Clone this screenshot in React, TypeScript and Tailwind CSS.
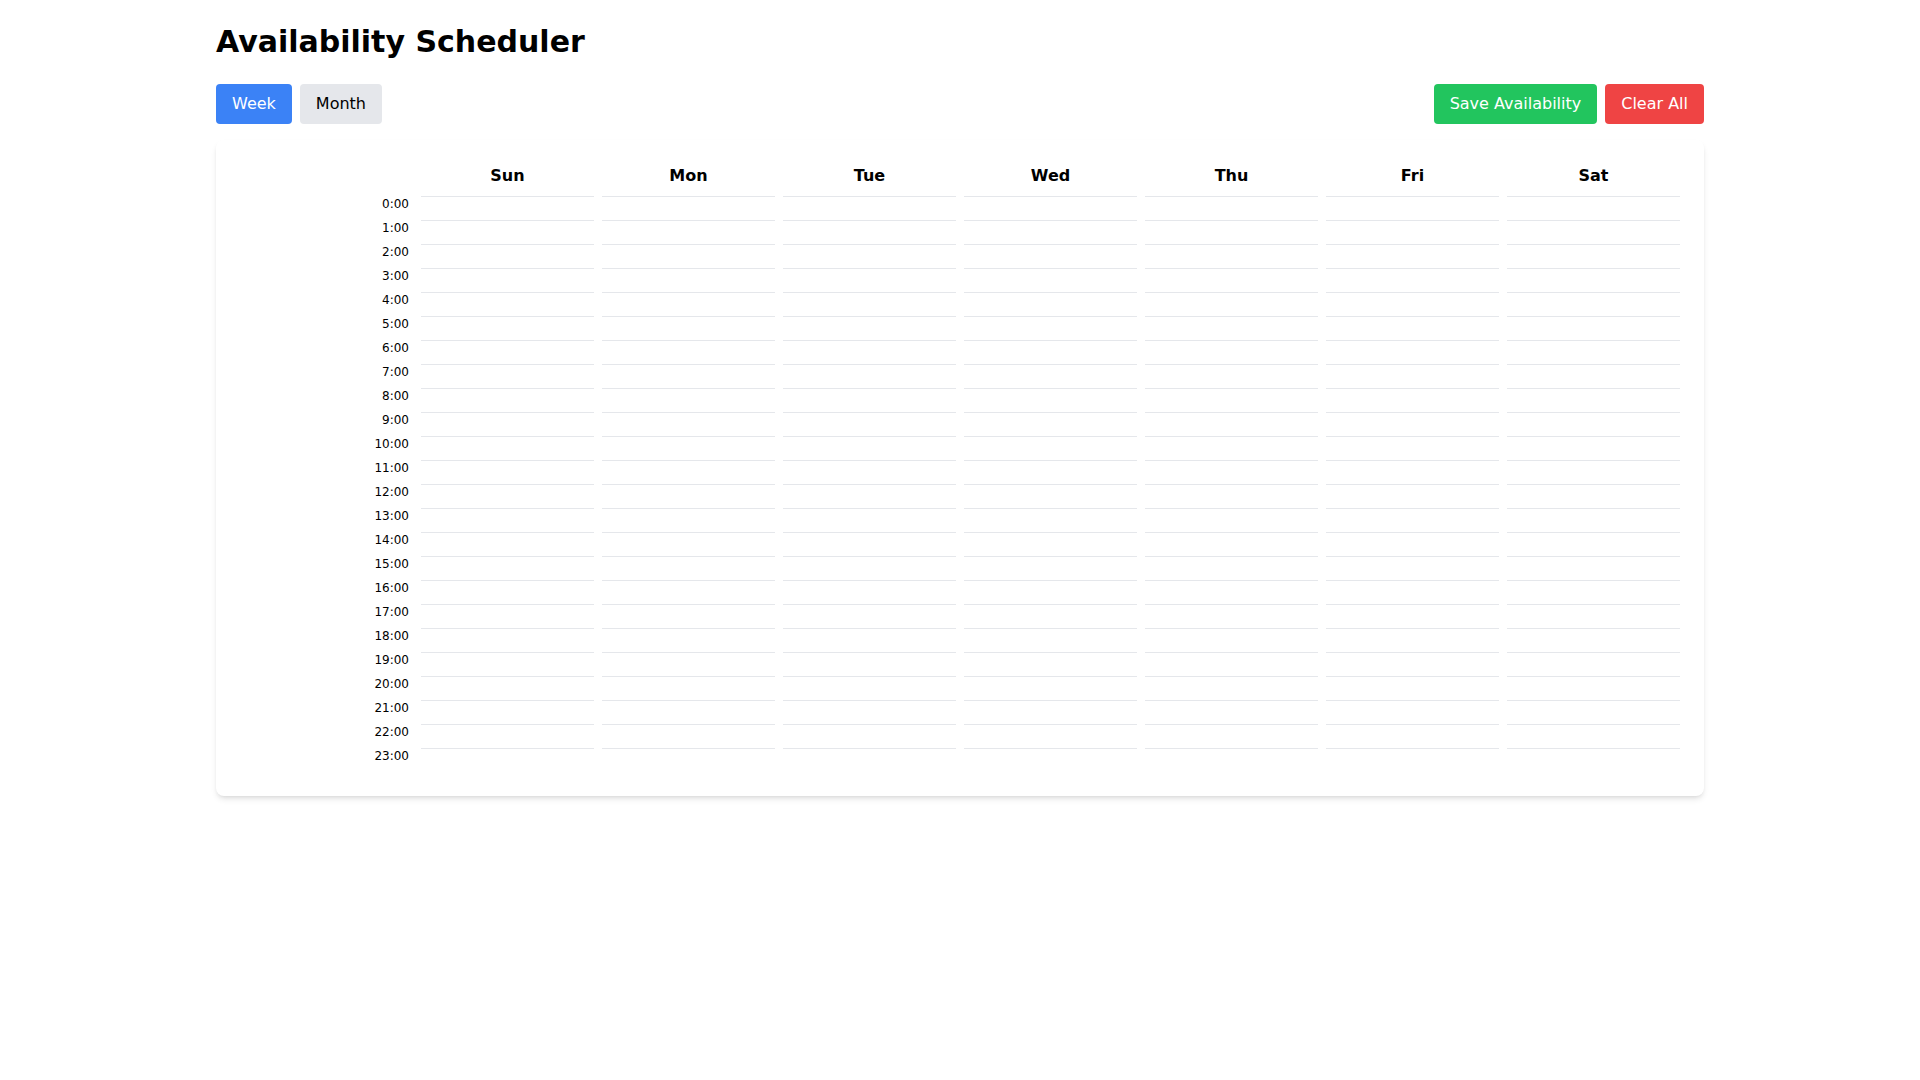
import React from 'react';

const DAYS = ['Sun', 'Mon', 'Tue', 'Wed', 'Thu', 'Fri', 'Sat'];
const HOURS = Array.from({ length: 24 }, (_, i) => `${i}:00`);

const App = () => {
  return (
    <div className="min-h-screen bg-white text-black" style={{ fontFamily: '"DejaVu Sans", sans-serif' }}>
      <div className="container mx-auto p-6">
        <h1 className="text-3xl font-bold mb-6">Availability Scheduler</h1>

        <div className="flex justify-between items-center mb-4">
          <div className="flex gap-2">
            <button className="px-4 py-2 rounded bg-[#3b82f6] text-white">Week</button>
            <button className="px-4 py-2 rounded bg-[#e5e7eb] text-black">Month</button>
          </div>
          <div className="flex gap-2">
            <button className="px-4 py-2 rounded bg-[#22c55e] text-white">Save Availability</button>
            <button className="px-4 py-2 rounded bg-[#ef4444] text-white">Clear All</button>
          </div>
        </div>

        {/* Week grid */}
        <div className="bg-white rounded-lg shadow-md p-6">
          <div className="grid grid-cols-8 gap-2 mb-2">
            <div />
            {DAYS.map((d) => (
              <div key={d} className="text-center font-bold">{d}</div>
            ))}
          </div>
          {HOURS.map((h) => (
            <div key={h} className="grid grid-cols-8 gap-2">
              <div className="h-6 text-right text-xs pr-1">{h}</div>
              {DAYS.map((d) => (
                <div key={d + h} className="h-6 border-t border-[#e5e7eb] cursor-pointer" />
              ))}
            </div>
          ))}
        </div>
      </div>
    </div>
  );
};

export default App;
